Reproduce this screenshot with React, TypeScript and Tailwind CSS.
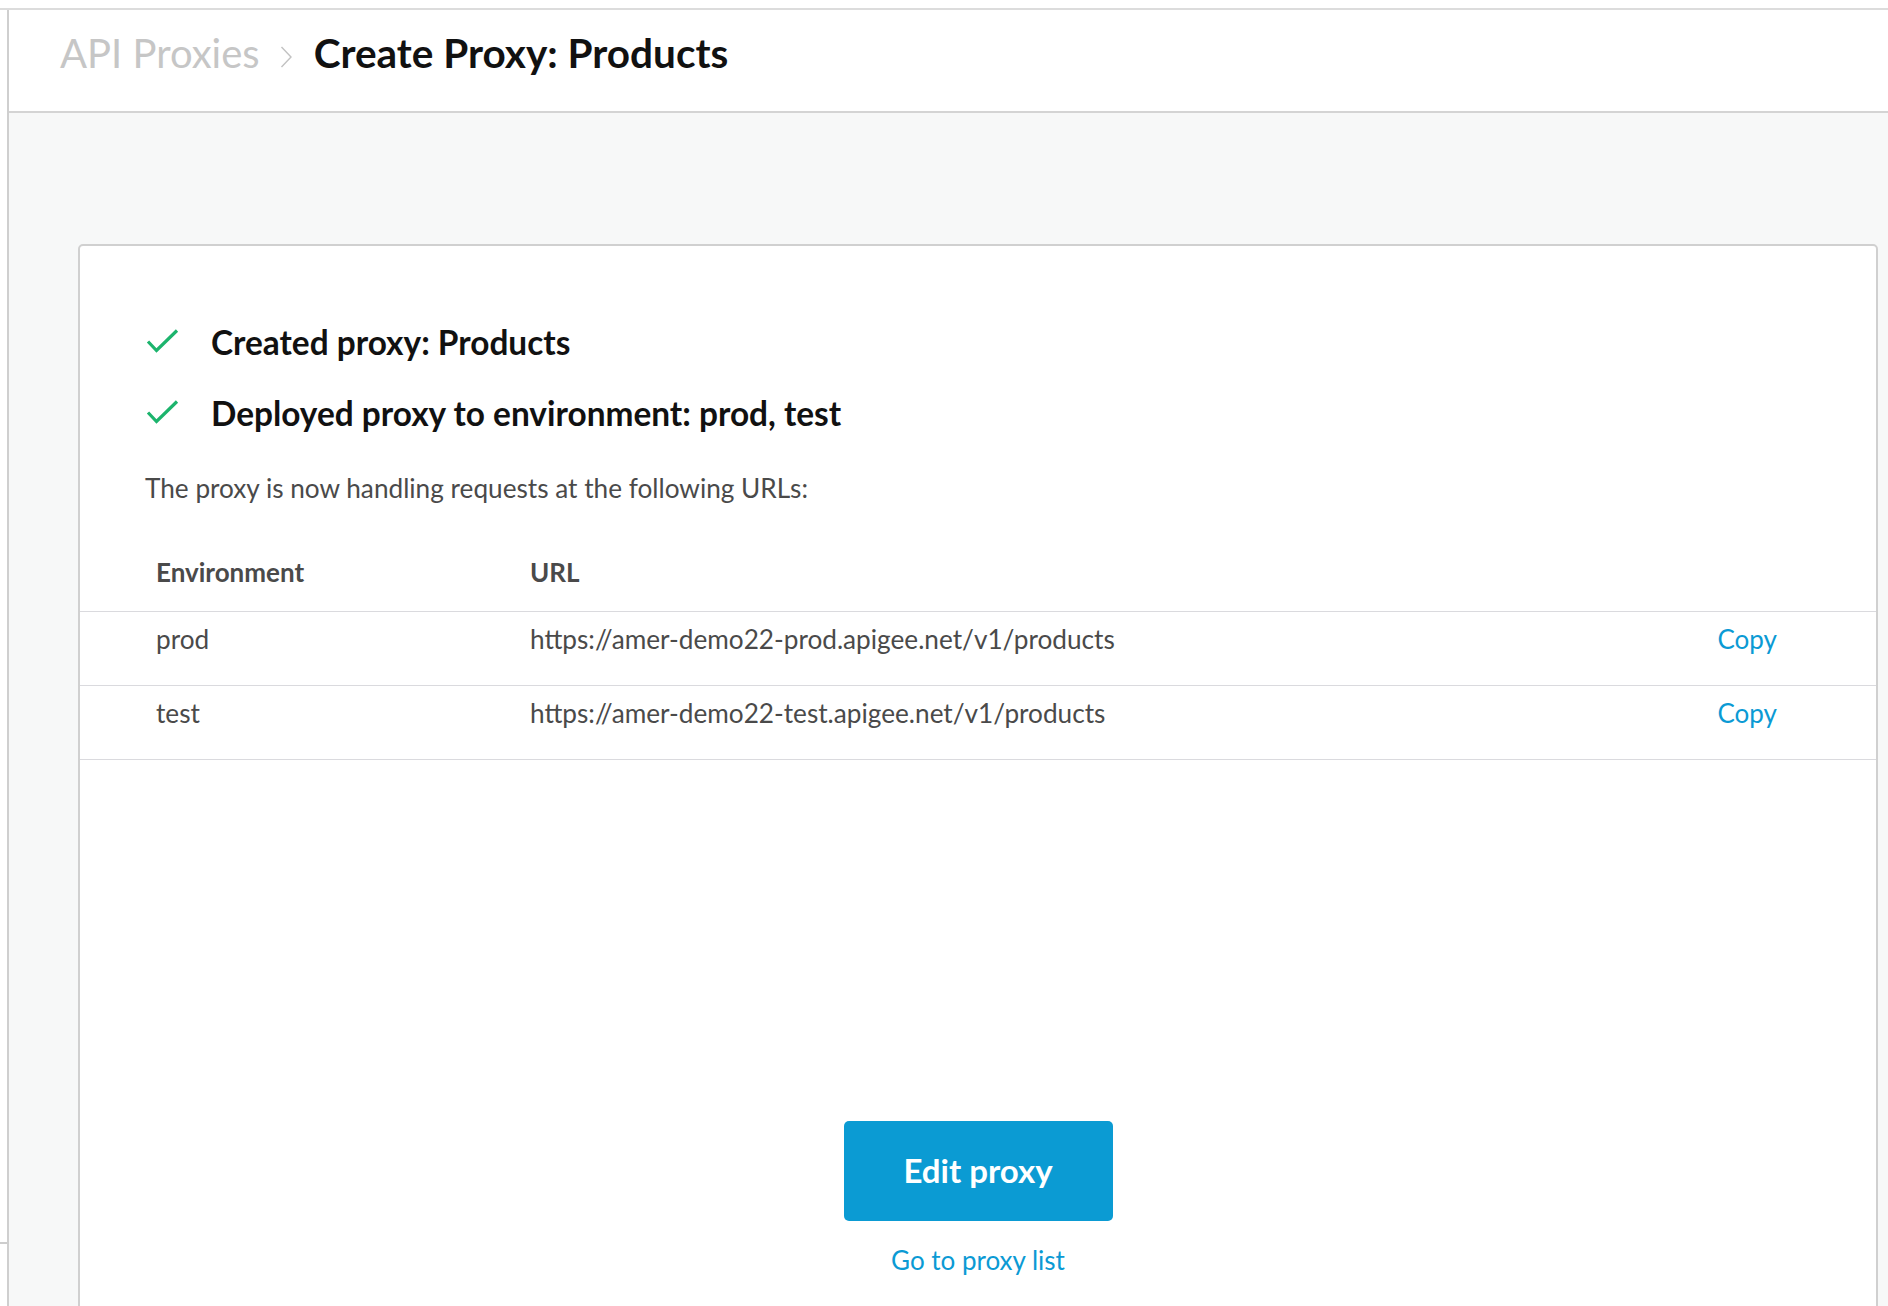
import { useState } from 'react'

const ROWS = [
  { env: 'prod', url: 'https://amer-demo22-prod.apigee.net/v1/products' },
  { env: 'test', url: 'https://amer-demo22-test.apigee.net/v1/products' },
]

function Check() {
  return (
    <svg width="34" height="28" viewBox="0 0 34 28" className="shrink-0">
      <path d="M2 13.5 L10.5 22.5 L31 2.5" fill="none" stroke="#1cb46d" strokeWidth="3.2" />
    </svg>
  )
}

function Chevron() {
  return (
    <svg width="13" height="22" viewBox="0 0 13 22" className="ml-[20px] mr-[21px] mt-[8px] shrink-0">
      <path d="M1.5 1 L11 11 L1.5 21" fill="none" stroke="#c2c2c2" strokeWidth="1.4" />
    </svg>
  )
}

export default function App() {
  const [copied, setCopied] = useState<string | null>(null)

  return (
    <div className="h-[1306px] w-full overflow-hidden bg-white font-['Lato','Liberation_Sans',sans-serif]">
      <div className="h-[8px] bg-white" />
      <div className="flex h-full border-t-2 border-[#dcdcdc]">
        {/* left rail sliver */}
        <div className="flex w-[7px] shrink-0 flex-col bg-white">
          <div className="h-[1232px]" />
          <div className="h-[2px] bg-[#cdcdcd]" />
        </div>

        <main className="flex min-w-0 flex-1 flex-col border-l-2 border-[#cfcfcf]">
          <header className="flex h-[103px] shrink-0 items-start border-b-2 border-[#d4d4d4] bg-white pl-[51px] pt-[19px]">
            <div className="flex items-center">
              <span className="text-[40px] leading-[48px] text-[#c6c6c6]">API Proxies</span>
              <Chevron />
              <h1 className="text-[40.5px] font-bold leading-[48px] text-[#111]">Create Proxy: Products</h1>
            </div>
          </header>

          <div className="flex-1 bg-[#f7f8f8] pl-[69px] pr-[10px] pt-[131px]">
            <section className="h-[1200px] rounded-[5px] border-2 border-[#d0d0d0] bg-white">
              <div className="flex flex-col gap-[35px] pl-[66px] pt-[78px]">
                <div className="flex h-[36px] items-center gap-[31px]">
                  <Check />
                  <span className="text-[33.4px] font-bold leading-[36px] text-[#111]">Created proxy: Products</span>
                </div>
                <div className="flex h-[36px] items-center gap-[31px]">
                  <Check />
                  <span className="text-[33.4px] font-bold leading-[36px] text-[#111]">
                    Deployed proxy to environment: prod, test
                  </span>
                </div>
              </div>

              <p className="mt-[42px] pl-[65px] text-[26.2px] leading-[31px] text-[#4a4a4a]">
                The proxy is now handling requests at the following URLs:
              </p>

              <div className="mt-[30px]">
                <div className="grid h-[78px] grid-cols-[374px_1fr_auto] items-center border-b border-[#dadade] pl-[76px] pr-[99px] text-[26px] font-bold text-[#4a4a4a]">
                  <span>Environment</span>
                  <span>URL</span>
                  <span />
                </div>
                {ROWS.map((r) => (
                  <div
                    key={r.env}
                    className="grid grid-cols-[374px_1fr_auto] border-b border-[#dadade] pb-[30px] pl-[76px] pr-[99px] pt-[12px] text-[26.2px] leading-[31px] text-[#4a4a4a]"
                  >
                    <span>{r.env}</span>
                    <span>{r.url}</span>
                    <button onClick={() => setCopied(r.env)} className="text-[26px] leading-[31px] text-[#0b9ad4]">
                      {copied === r.env ? 'Copied' : 'Copy'}
                    </button>
                  </div>
                ))}
              </div>

              <div className="mt-[361px] flex flex-col items-center">
                <button className="h-[100px] w-[269px] rounded-[5px] bg-[#0b9bd3] text-[33px] font-bold text-white">
                  Edit proxy
                </button>
                <a className="mt-[24px] cursor-pointer text-[26px] leading-[31px] text-[#0b9ad4]">Go to proxy list</a>
              </div>
            </section>
          </div>
        </main>
      </div>
    </div>
  )
}
